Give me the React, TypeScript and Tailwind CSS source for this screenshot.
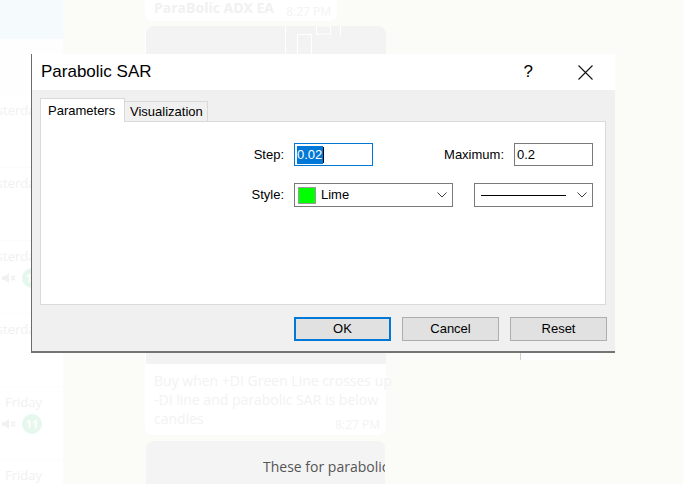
import React from "react";

const Chevron = () => (
  <svg width="10" height="6" viewBox="0 0 10 6" className="shrink-0">
    <path d="M0.5 0.5 L5 5 L9.5 0.5" fill="none" stroke="#3c3c3c" strokeWidth="1" />
  </svg>
);

const dates = ["Yesterday", "Yesterday", "Yesterday", "Yesterday", "Friday", "Friday"];
const badges = [false, false, true, false, true, false];

function LeftList() {
  return (
    <div className="w-[63px] shrink-0 flex flex-col bg-white font-['Open_Sans',sans-serif]">
      <div className="h-[39px] shrink-0 bg-[#f5fbfd]" />
      <div className="h-[56px] shrink-0 bg-[#fefefe]" />
      {dates.map((d, i) => (
        <div key={i} className="h-[73px] shrink-0 flex flex-col items-end pr-[21px] pt-[6px] border-b border-[#fcfcfc]">
          <div className="text-[13px] leading-[18px] text-[#f1f1f1] whitespace-nowrap">{d}</div>
          {badges[i] && (
            <div className="flex items-center gap-[6px] mt-[3px]">
              <svg width="15" height="14" viewBox="0 0 15 14">
                <path d="M1 5h3l4-3v10l-4-3H1z" fill="#f1f1f1" />
                <path d="M10 4.5l4 5M14 4.5l-4 5" stroke="#f1f1f1" strokeWidth="1.5" />
              </svg>
              <div className="w-[20px] h-[20px] rounded-full bg-[#e6f8ee] flex items-center justify-center text-[11px] font-bold text-white">
                11
              </div>
            </div>
          )}
        </div>
      ))}
    </div>
  );
}

function Chat() {
  return (
    <div className="flex-1 flex flex-col pl-[82px] bg-[#fbfbf8] font-['Open_Sans',sans-serif]">
      <div className="w-[192px] h-[22px] shrink-0 bg-white rounded-b-[8px] flex items-start pl-[9px] pr-[6px] -mt-px">
        <span className="text-[14px] leading-[17px] font-bold text-[#f1f1f1] whitespace-nowrap">ParaBolic ADX EA</span>
        <span className="ml-auto mt-[6px] text-[12px] leading-[14px] text-[#f3f3f3] whitespace-nowrap">8:27 PM</span>
      </div>
      <div className="mt-[5px] w-[241px] shrink-0 bg-white rounded-[8px] flex flex-col">
        <div className="h-[338px] bg-[#f3f3f3] rounded-t-[8px] ml-px overflow-hidden">
          <svg width="240" height="338" viewBox="0 0 240 338">
            <line x1="139.5" y1="0" x2="139.5" y2="30" stroke="#ffffff" strokeWidth="1" />
            <rect x="151.5" y="8.5" width="14" height="22" fill="none" stroke="#ffffff" />
            <rect x="170.5" y="0" width="14" height="8" fill="none" stroke="#ffffff" />
            <line x1="194.5" y1="0" x2="194.5" y2="10" stroke="#ffffff" strokeWidth="1" />
          </svg>
        </div>
        <div className="pl-[9px] pr-[8px] pt-[7px] pb-[7px] text-[14px] leading-[19px] text-[#f2f2f2]">
          <div className="whitespace-nowrap">Buy when +DI Green Line crosses up</div>
          <div className="whitespace-nowrap">-DI line and parabolic SAR is below</div>
          <div className="flex items-end">
            <span>candles</span>
            <span className="ml-auto text-[12px] leading-[14px] mb-[-4px] mr-[-2px] text-[#f3f3f3]">8:27 PM</span>
          </div>
        </div>
      </div>
      <div className="mt-[6px] w-[239px] ml-px flex-1 bg-[#f4f4f4] rounded-t-[8px] overflow-hidden pt-[16px] pl-[117px]">
        <div className="text-[14px] leading-[20px] text-[#555555] whitespace-nowrap">These for parabolic</div>
      </div>
    </div>
  );
}

function Dialog() {
  return (
    <div className="absolute left-[31px] top-[54px] w-[584px] h-[299px] flex flex-col bg-[#f0f0f0] border-l border-l-[#6b6b6b] border-b-2 border-b-[#747474] font-['Liberation_Sans',Arial,sans-serif] text-black">
      <div className="h-[36px] shrink-0 bg-white flex items-center pl-[9px]">
        <span className="text-[17px] leading-[20px]">Parabolic SAR</span>
        <span className="ml-auto text-[17px] leading-[20px]">?</span>
        <svg width="15" height="15" viewBox="0 0 15 15" className="ml-[45px] mr-[22px]">
          <path d="M0.5 0.5 L14.5 14.5 M14.5 0.5 L0.5 14.5" stroke="#111" strokeWidth="1.1" fill="none" />
        </svg>
      </div>
      <div className="flex-1 flex flex-col pt-[8px] pl-[8px]">
        <div className="h-[23px] flex items-end text-[13px]">
          <div className="relative z-10 w-[85px] h-[24px] -mb-px bg-white border border-[#d9d9d9] border-b-0 pl-[7px] flex items-center">
            Parameters
          </div>
          <div className="w-[83px] h-[20px] bg-[#f0f0f0] border border-l-0 border-b-0 border-[#d9d9d9] pl-[5px] flex items-center">
            Visualization
          </div>
        </div>
        <div className="w-[566px] h-[184px] bg-white border border-[#d9d9d9] pt-[21px] text-[13px]">
          <div className="flex items-center h-[23px]">
            <div className="w-[243px] text-right">Step:</div>
            <div className="ml-[10px] w-[79px] h-[23px] border border-[#0078d7] bg-white flex items-center pl-[2px]">
              <span className="bg-[#0078d7] text-white leading-[18px] pr-px">0.02</span>
              <span className="w-px h-[16px] bg-black" />
            </div>
            <div className="w-[131px] text-right">Maximum:</div>
            <div className="ml-[10px] w-[79px] h-[23px] border border-[#7a7a7a] bg-white flex items-center pl-[2px]">
              0.2
            </div>
          </div>
          <div className="flex items-center h-[24px] mt-[17px]">
            <div className="w-[243px] text-right">Style:</div>
            <div className="ml-[10px] w-[159px] h-[24px] border border-[#7a7a7a] bg-white flex items-center pl-[3px] pr-[5px]">
              <span className="w-[18px] h-[17px] bg-[#00ff00] border border-[#9a9a9a]" />
              <span className="ml-[5px]">Lime</span>
              <span className="ml-auto flex">
                <Chevron />
              </span>
            </div>
            <div className="ml-[21px] w-[119px] h-[24px] border border-[#7a7a7a] bg-white flex items-center pl-[6px] pr-[5px]">
              <span className="w-[85px] h-px bg-black" />
              <span className="ml-auto flex">
                <Chevron />
              </span>
            </div>
          </div>
        </div>
        <div className="mt-[12px] flex justify-end pr-[8px] gap-[11px] text-[13px]">
          <div className="w-[97px] h-[24px] bg-[#e1e1e1] border-2 border-[#0078d7] flex items-center justify-center">OK</div>
          <div className="w-[97px] h-[24px] bg-[#e1e1e1] border border-[#adadad] flex items-center justify-center">Cancel</div>
          <div className="w-[97px] h-[24px] bg-[#e1e1e1] border border-[#adadad] flex items-center justify-center">Reset</div>
        </div>
      </div>
    </div>
  );
}

export default function App() {
  return (
    <div className="relative w-[683px] h-[484px] overflow-hidden bg-[#fbfbf8]">
      <div className="flex h-full">
        <LeftList />
        <Chat />
      </div>
      <div className="absolute left-[520px] top-[328px] w-[80px] h-[32px] border-l border-[#d0d0d0] bg-white pl-[40px] pt-[12px] text-[13px] leading-[16px] text-[#444] font-['Open_Sans',sans-serif]">
        Close
      </div>
      <Dialog />
    </div>
  );
}
